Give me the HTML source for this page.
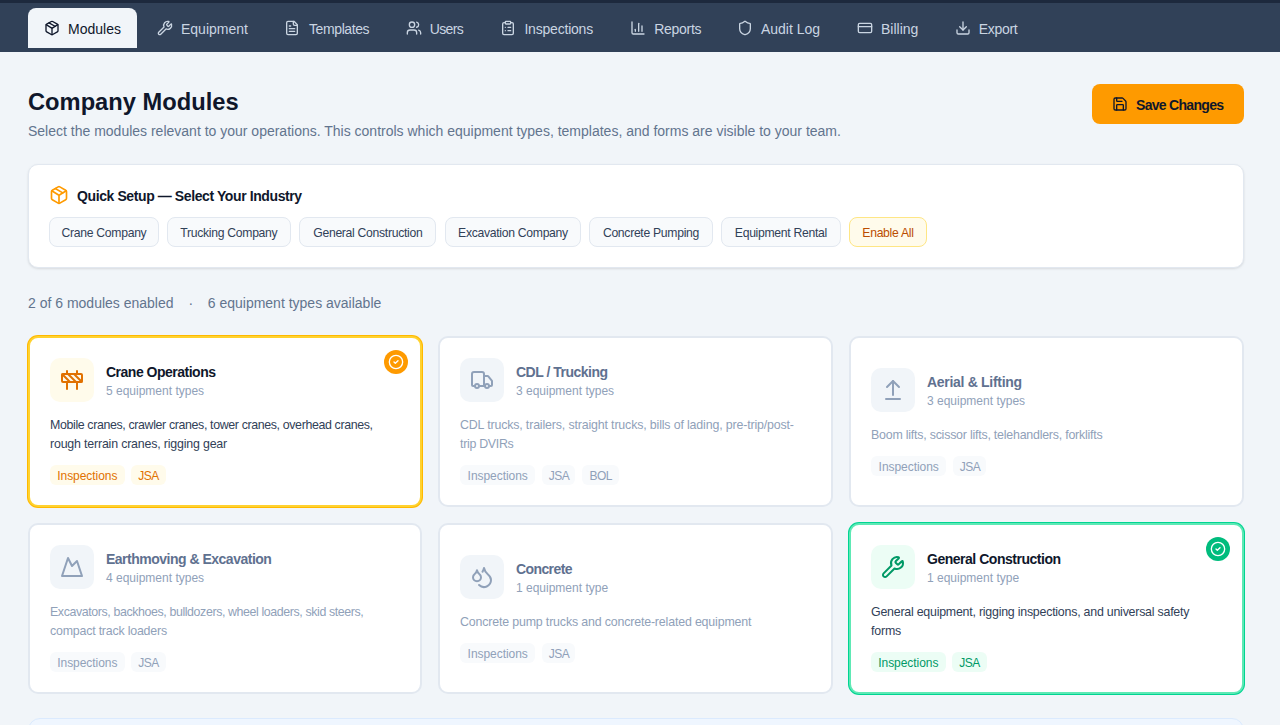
<!DOCTYPE html>
<html><head><meta charset="utf-8">
<style>
*{box-sizing:border-box;margin:0;padding:0}
html,body{width:1280px;height:725px;overflow:hidden;background:#f1f5f9;font-family:"Liberation Sans",sans-serif}
.abs{position:absolute}
svg{display:block;fill:none;stroke:currentColor;stroke-width:2;stroke-linecap:round;stroke-linejoin:round}
#topstrip{position:absolute;left:0;top:0;width:1280px;height:3px;background:#1d293d}
#nav{position:absolute;left:0;top:3px;width:1280px;height:49px;background:#314158}
.tab{position:absolute;top:5px;height:40px;color:#cad5e2;font-size:14px}
.tab.active{background:#f1f5f9;color:#0f172b;border-radius:8px 8px 0 0}
.tab svg{position:absolute;left:16px;top:12px;width:16px;height:16px}
.tab span{position:absolute;left:40px;top:13px;line-height:16px;white-space:nowrap}
h1{position:absolute;left:28px;top:86px;font-size:23.7px;line-height:32px;font-weight:bold;color:#0f172b;white-space:nowrap}
.sub{position:absolute;left:28px;top:121px;font-size:14px;line-height:20px;color:#62748e;white-space:nowrap}
#save{position:absolute;left:1092px;top:84px;width:152px;height:40px;background:#fe9a00;border-radius:8px;color:#0f172b}
#save svg{position:absolute;left:20px;top:12px;width:16px;height:16px}
#save span{position:absolute;left:44px;top:13px;line-height:16px;font-size:14px;letter-spacing:-0.7px;font-weight:bold;white-space:nowrap}
#qs{position:absolute;left:28px;top:164px;width:1216px;height:104px;background:#fff;border:1px solid #e2e8f0;border-radius:10px;box-shadow:0 1px 3px rgba(0,0,0,.08),0 1px 2px rgba(0,0,0,.04)}
#qs .ic{position:absolute;left:20px;top:20px;width:20px;height:20px;color:#fe9a00}
#qs .ttl{position:absolute;left:48px;top:23.2px;letter-spacing:-0.4px;font-size:14px;line-height:16px;font-weight:bold;color:#0f172b;white-space:nowrap}
.chip{position:absolute;top:52px;height:30px;border:1px solid #e2e8f0;background:#f8fafc;border-radius:8px;color:#314158;font-size:12.2px;letter-spacing:-0.3px;line-height:30px;text-align:center;white-space:nowrap}
.chip.amb{background:#fffbeb;border-color:#fee685;color:#bb4d00}
.stats{position:absolute;left:28px;top:293px;font-size:14px;line-height:20px;color:#62748e;white-space:nowrap}
.card{position:absolute;width:394.67px;height:171px;background:#fff;border:2px solid #e2e8f0;border-radius:10px;padding:0 20px;display:flex;flex-direction:column;justify-content:center}
.card.amber{border-color:#ffd230;box-shadow:0 0 0 1px #ffb900}
.card.green{border-color:#5ee9b5;box-shadow:0 0 0 1px #00d492}
.hdr{position:relative;height:44px}
.ibox{position:absolute;left:0;top:0;width:44px;height:44px;border-radius:10px;background:#f1f5f9;color:#90a1b9}
.ibox svg{position:absolute;left:10px;top:10px;width:24px;height:24px}
.amber .ibox{background:#fffbeb;color:#e17100}
.green .ibox{background:#ecfdf5;color:#009966}
.ctitle{position:absolute;left:56px;top:5px;font-size:14px;letter-spacing:-0.5px;line-height:18px;font-weight:bold;color:#5f7190;white-space:nowrap}
.amber .ctitle,.green .ctitle{color:#0f172b}
.csub{position:absolute;left:56px;top:25px;font-size:12px;line-height:16px;color:#90a1b9;white-space:nowrap}
.desc{margin-top:12px;position:relative;top:2px;font-size:12.4px;letter-spacing:-0.36px;line-height:19px;color:#90a1b9;white-space:nowrap}
.amber .desc,.green .desc{color:#314158}
.tags{margin-top:13px;height:20px;position:relative}
.tag{position:absolute;top:0;height:20px;border-radius:6px;background:#f8fafc;color:#90a1b9;font-size:12px;letter-spacing:-0.05px;line-height:22px;text-align:center;white-space:nowrap}
.amber .tag{background:#fffbeb;color:#e17100}
.green .tag{background:#ecfdf5;color:#009966}
.badge{position:absolute;top:12px;right:12px;width:24px;height:24px;border-radius:50%;color:#fff}
.badge svg{position:absolute;left:4px;top:4px;width:16px;height:16px}
.amber .badge{background:#fe9a00}
.green .badge{background:#00bc7d}
#bottom{position:absolute;left:28px;top:718px;width:1216px;height:80px;background:#eff6ff;border:1px solid #dbeafe;border-radius:12px}
</style></head><body>
<div id="topstrip"></div>
<div id="nav">
  <div class="tab active" style="left:28px;width:109px"><svg viewBox="0 0 24 24"><path d="M11 21.73a2 2 0 0 0 2 0l7-4A2 2 0 0 0 21 16V8a2 2 0 0 0-1-1.73l-7-4a2 2 0 0 0-2 0l-7 4A2 2 0 0 0 3 8v8a2 2 0 0 0 1 1.73z"/><path d="M12 22V12"/><path d="m3.3 7 7.703 4.734a2 2 0 0 0 1.994 0L20.7 7"/><path d="m7.5 4.27 9 5.15"/></svg><span>Modules</span></div>
  <div class="tab" style="left:141px;width:124px"><svg viewBox="0 0 24 24"><path d="M14.7 6.3a1 1 0 0 0 0 1.4l1.6 1.6a1 1 0 0 0 1.4 0l3.106-3.105c.32-.322.863-.22.983.218a6 6 0 0 1-8.259 7.057l-7.91 7.91a1 1 0 0 1-2.999-3l7.91-7.91a6 6 0 0 1 7.057-8.259c.438.12.54.662.219.984z"/></svg><span>Equipment</span></div>
  <div class="tab" style="left:268px;width:118px"><svg viewBox="0 0 24 24"><path d="M15 2H6a2 2 0 0 0-2 2v16a2 2 0 0 0 2 2h12a2 2 0 0 0 2-2V7Z"/><path d="M14 2v4a2 2 0 0 0 2 2h4"/><path d="M10 9H8"/><path d="M16 13H8"/><path d="M16 17H8"/></svg><span style="left:41px;letter-spacing:-0.4px">Templates</span></div>
  <div class="tab" style="left:389.7px;width:90px"><svg viewBox="0 0 24 24"><path d="M16 21v-2a4 4 0 0 0-4-4H6a4 4 0 0 0-4 4v2"/><circle cx="9" cy="7" r="4"/><path d="M22 21v-2a4 4 0 0 0-3-3.87"/><path d="M16 3.13a4 4 0 0 1 0 7.75"/></svg><span style="letter-spacing:-0.6px">Users</span></div>
  <div class="tab" style="left:484.4px;width:126px"><svg viewBox="0 0 24 24"><rect width="8" height="4" x="8" y="2" rx="1" ry="1"/><path d="M16 4h2a2 2 0 0 1 2 2v14a2 2 0 0 1-2 2H6a2 2 0 0 1-2-2V6a2 2 0 0 1 2-2h2"/><path d="M12 11h4"/><path d="M12 16h4"/><path d="M8 11h.01"/><path d="M8 16h.01"/></svg><span style="letter-spacing:-0.2px">Inspections</span></div>
  <div class="tab" style="left:614.3px;width:103px"><svg viewBox="0 0 24 24"><path d="M3 3v16a2 2 0 0 0 2 2h16"/><path d="M18 17V9"/><path d="M13 17V5"/><path d="M8 17v-3"/></svg><span style="letter-spacing:-0.3px">Reports</span></div>
  <div class="tab" style="left:720.9px;width:116px"><svg viewBox="0 0 24 24"><path d="M20 13c0 5-3.5 7.5-7.66 8.95a1 1 0 0 1-.67-.01C7.5 20.5 4 18 4 13V6a1 1 0 0 1 1-1c2 0 4.5-1.2 6.24-2.72a1.17 1.17 0 0 1 1.52 0C14.51 3.81 17 5 19 5a1 1 0 0 1 1 1z"/></svg><span>Audit Log</span></div>
  <div class="tab" style="left:841px;width:94px"><svg viewBox="0 0 24 24"><rect width="20" height="14" x="2" y="5" rx="2"/><line x1="2" x2="22" y1="10" y2="10"/></svg><span>Billing</span></div>
  <div class="tab" style="left:938.7px;width:96px"><svg viewBox="0 0 24 24"><path d="M21 15v4a2 2 0 0 1-2 2H5a2 2 0 0 1-2-2v-4"/><polyline points="7 10 12 15 17 10"/><line x1="12" x2="12" y1="15" y2="3"/></svg><span style="letter-spacing:-0.3px">Export</span></div>
</div>

<h1>Company Modules</h1>
<div class="sub">Select the modules relevant to your operations. This controls which equipment types, templates, and forms are visible to your team.</div>
<div id="save"><svg viewBox="0 0 24 24"><path d="M15.2 3a2 2 0 0 1 1.4.6l3.8 3.8a2 2 0 0 1 .6 1.4V19a2 2 0 0 1-2 2H5a2 2 0 0 1-2-2V5a2 2 0 0 1 2-2z"/><path d="M17 21v-7a1 1 0 0 0-1-1H8a1 1 0 0 0-1 1v7"/><path d="M7 3v4a1 1 0 0 0 1 1h7"/></svg><span>Save Changes</span></div>

<div id="qs">
  <svg class="ic" viewBox="0 0 24 24"><path d="M11 21.73a2 2 0 0 0 2 0l7-4A2 2 0 0 0 21 16V8a2 2 0 0 0-1-1.73l-7-4a2 2 0 0 0-2 0l-7 4A2 2 0 0 0 3 8v8a2 2 0 0 0 1 1.73z"/><path d="M12 22V12"/><path d="m3.3 7 7.703 4.734a2 2 0 0 0 1.994 0L20.7 7"/><path d="m7.5 4.27 9 5.15"/></svg>
  <div class="ttl">Quick Setup — Select Your Industry</div>
  <div class="chip" style="left:20.3px;width:109.4px">Crane Company</div>
  <div class="chip" style="left:138.1px;width:123.5px">Trucking Company</div>
  <div class="chip" style="left:270.3px;width:137.1px">General Construction</div>
  <div class="chip" style="left:416.4px;width:135.2px">Excavation Company</div>
  <div class="chip" style="left:560.3px;width:123.3px">Concrete Pumping</div>
  <div class="chip" style="left:692.2px;width:119.4px">Equipment Rental</div>
  <div class="chip amb" style="left:820.3px;width:77.3px">Enable All</div>
</div>

<div class="stats">2 of 6 modules enabled<span style="margin:0 14.5px 0 15px">·</span>6 equipment types available</div>

<div class="card amber" style="left:28px;width:394px;top:336px">
  <div class="badge"><svg viewBox="0 0 24 24"><circle cx="12" cy="12" r="10"/><path d="m9 12 2 2 4-4"/></svg></div>
  <div class="hdr"><div class="ibox"><svg viewBox="0 0 24 24"><rect x="2" y="6" width="20" height="8" rx="1"/><path d="M17 14v7"/><path d="M7 14v7"/><path d="M17 3v3"/><path d="M7 3v3"/><path d="M10 14 2.3 6.3"/><path d="m14 6 7.7 7.7"/><path d="m8 6 8 8"/></svg></div><div class="ctitle" style="letter-spacing:-0.5px">Crane Operations</div><div class="csub">5 equipment types</div></div>
  <div class="desc"><div style="letter-spacing:-0.367px">Mobile cranes, crawler cranes, tower cranes, overhead cranes,</div><div style="letter-spacing:-0.183px">rough terrain cranes, rigging gear</div></div>
  <div class="tags"><div class="tag" style="left:0px;width:74.7px">Inspections</div><div class="tag" style="left:81.3px;width:34.5px;letter-spacing:-0.5px">JSA</div></div>
</div>

<div class="card " style="left:438px;width:395px;top:336px">
  <div class="hdr"><div class="ibox"><svg viewBox="0 0 24 24"><path d="M14 18V6a2 2 0 0 0-2-2H4a2 2 0 0 0-2 2v11a1 1 0 0 0 1 1h2"/><path d="M15 18H9"/><path d="M19 18h2a1 1 0 0 0 1-1v-3.65a1 1 0 0 0-.22-.624l-3.48-4.35A1 1 0 0 0 17.52 8H14"/><circle cx="17" cy="18" r="2"/><circle cx="7" cy="18" r="2"/></svg></div><div class="ctitle" style="letter-spacing:-0.5px">CDL / Trucking</div><div class="csub">3 equipment types</div></div>
  <div class="desc"><div style="letter-spacing:-0.153px">CDL trucks, trailers, straight trucks, bills of lading, pre-trip/post-</div><div style="letter-spacing:-0.3px">trip DVIRs</div></div>
  <div class="tags"><div class="tag" style="left:0px;width:75.4px">Inspections</div><div class="tag" style="left:82.3px;width:33.2px;letter-spacing:-0.5px">JSA</div><div class="tag" style="left:122.1px;width:37.3px;letter-spacing:-0.5px">BOL</div></div>
</div>

<div class="card " style="left:849px;width:395px;top:336px">
  <div class="hdr"><div class="ibox"><svg viewBox="0 0 24 24"><path d="m18 9-6-6-6 6"/><path d="M12 3v14"/><path d="M5 21h14"/></svg></div><div class="ctitle" style="letter-spacing:-0.3px">Aerial &amp; Lifting</div><div class="csub">3 equipment types</div></div>
  <div class="desc"><div style="letter-spacing:-0.218px">Boom lifts, scissor lifts, telehandlers, forklifts</div></div>
  <div class="tags"><div class="tag" style="left:0px;width:75.4px">Inspections</div><div class="tag" style="left:82.3px;width:33.2px;letter-spacing:-0.5px">JSA</div></div>
</div>

<div class="card " style="left:28px;width:394px;top:523px">
  <div class="hdr"><div class="ibox"><svg viewBox="0 0 24 24"><path d="m8 3 4 8 5-5 5 15H2L8 3z"/></svg></div><div class="ctitle" style="letter-spacing:-0.5px">Earthmoving &amp; Excavation</div><div class="csub">4 equipment types</div></div>
  <div class="desc"><div style="letter-spacing:-0.395px">Excavators, backhoes, bulldozers, wheel loaders, skid steers,</div><div style="letter-spacing:-0.205px">compact track loaders</div></div>
  <div class="tags"><div class="tag" style="left:0px;width:74.7px">Inspections</div><div class="tag" style="left:81.3px;width:34.5px;letter-spacing:-0.5px">JSA</div></div>
</div>

<div class="card " style="left:438px;width:395px;top:523px">
  <div class="hdr"><div class="ibox"><svg viewBox="0 0 24 24"><path d="M7 16.3c2.2 0 4-1.83 4-4.05 0-1.16-.57-2.26-1.71-3.19S7.29 6.75 7 5.3c-.29 1.45-1.14 2.84-2.29 3.76S3 11.1 3 12.25c0 2.22 1.8 4.05 4 4.05z"/><path d="M12.56 6.6A10.97 10.97 0 0 0 14 3.02c.5 2.5 2 4.9 4 6.5s3 3.5 3 5.5a6.98 6.98 0 0 1-11.91 4.97"/></svg></div><div class="ctitle" style="letter-spacing:-0.6px">Concrete</div><div class="csub">1 equipment type</div></div>
  <div class="desc"><div style="letter-spacing:-0.163px">Concrete pump trucks and concrete-related equipment</div></div>
  <div class="tags"><div class="tag" style="left:0px;width:75.4px">Inspections</div><div class="tag" style="left:82.3px;width:33.2px;letter-spacing:-0.5px">JSA</div></div>
</div>

<div class="card green" style="left:849px;width:395px;top:523px">
  <div class="badge"><svg viewBox="0 0 24 24"><circle cx="12" cy="12" r="10"/><path d="m9 12 2 2 4-4"/></svg></div>
  <div class="hdr"><div class="ibox"><svg viewBox="0 0 24 24"><path d="M14.7 6.3a1 1 0 0 0 0 1.4l1.6 1.6a1 1 0 0 0 1.4 0l3.106-3.105c.32-.322.863-.22.983.218a6 6 0 0 1-8.259 7.057l-7.91 7.91a1 1 0 0 1-2.999-3l7.91-7.91a6 6 0 0 1 7.057-8.259c.438.12.54.662.219.984z"/></svg></div><div class="ctitle" style="letter-spacing:-0.48px">General Construction</div><div class="csub">1 equipment type</div></div>
  <div class="desc"><div style="letter-spacing:-0.23px">General equipment, rigging inspections, and universal safety</div><div style="letter-spacing:-0.175px">forms</div></div>
  <div class="tags"><div class="tag" style="left:0px;width:74.7px">Inspections</div><div class="tag" style="left:81.3px;width:34.5px;letter-spacing:-0.5px">JSA</div></div>
</div>

<div id="bottom"></div>
</body></html>
